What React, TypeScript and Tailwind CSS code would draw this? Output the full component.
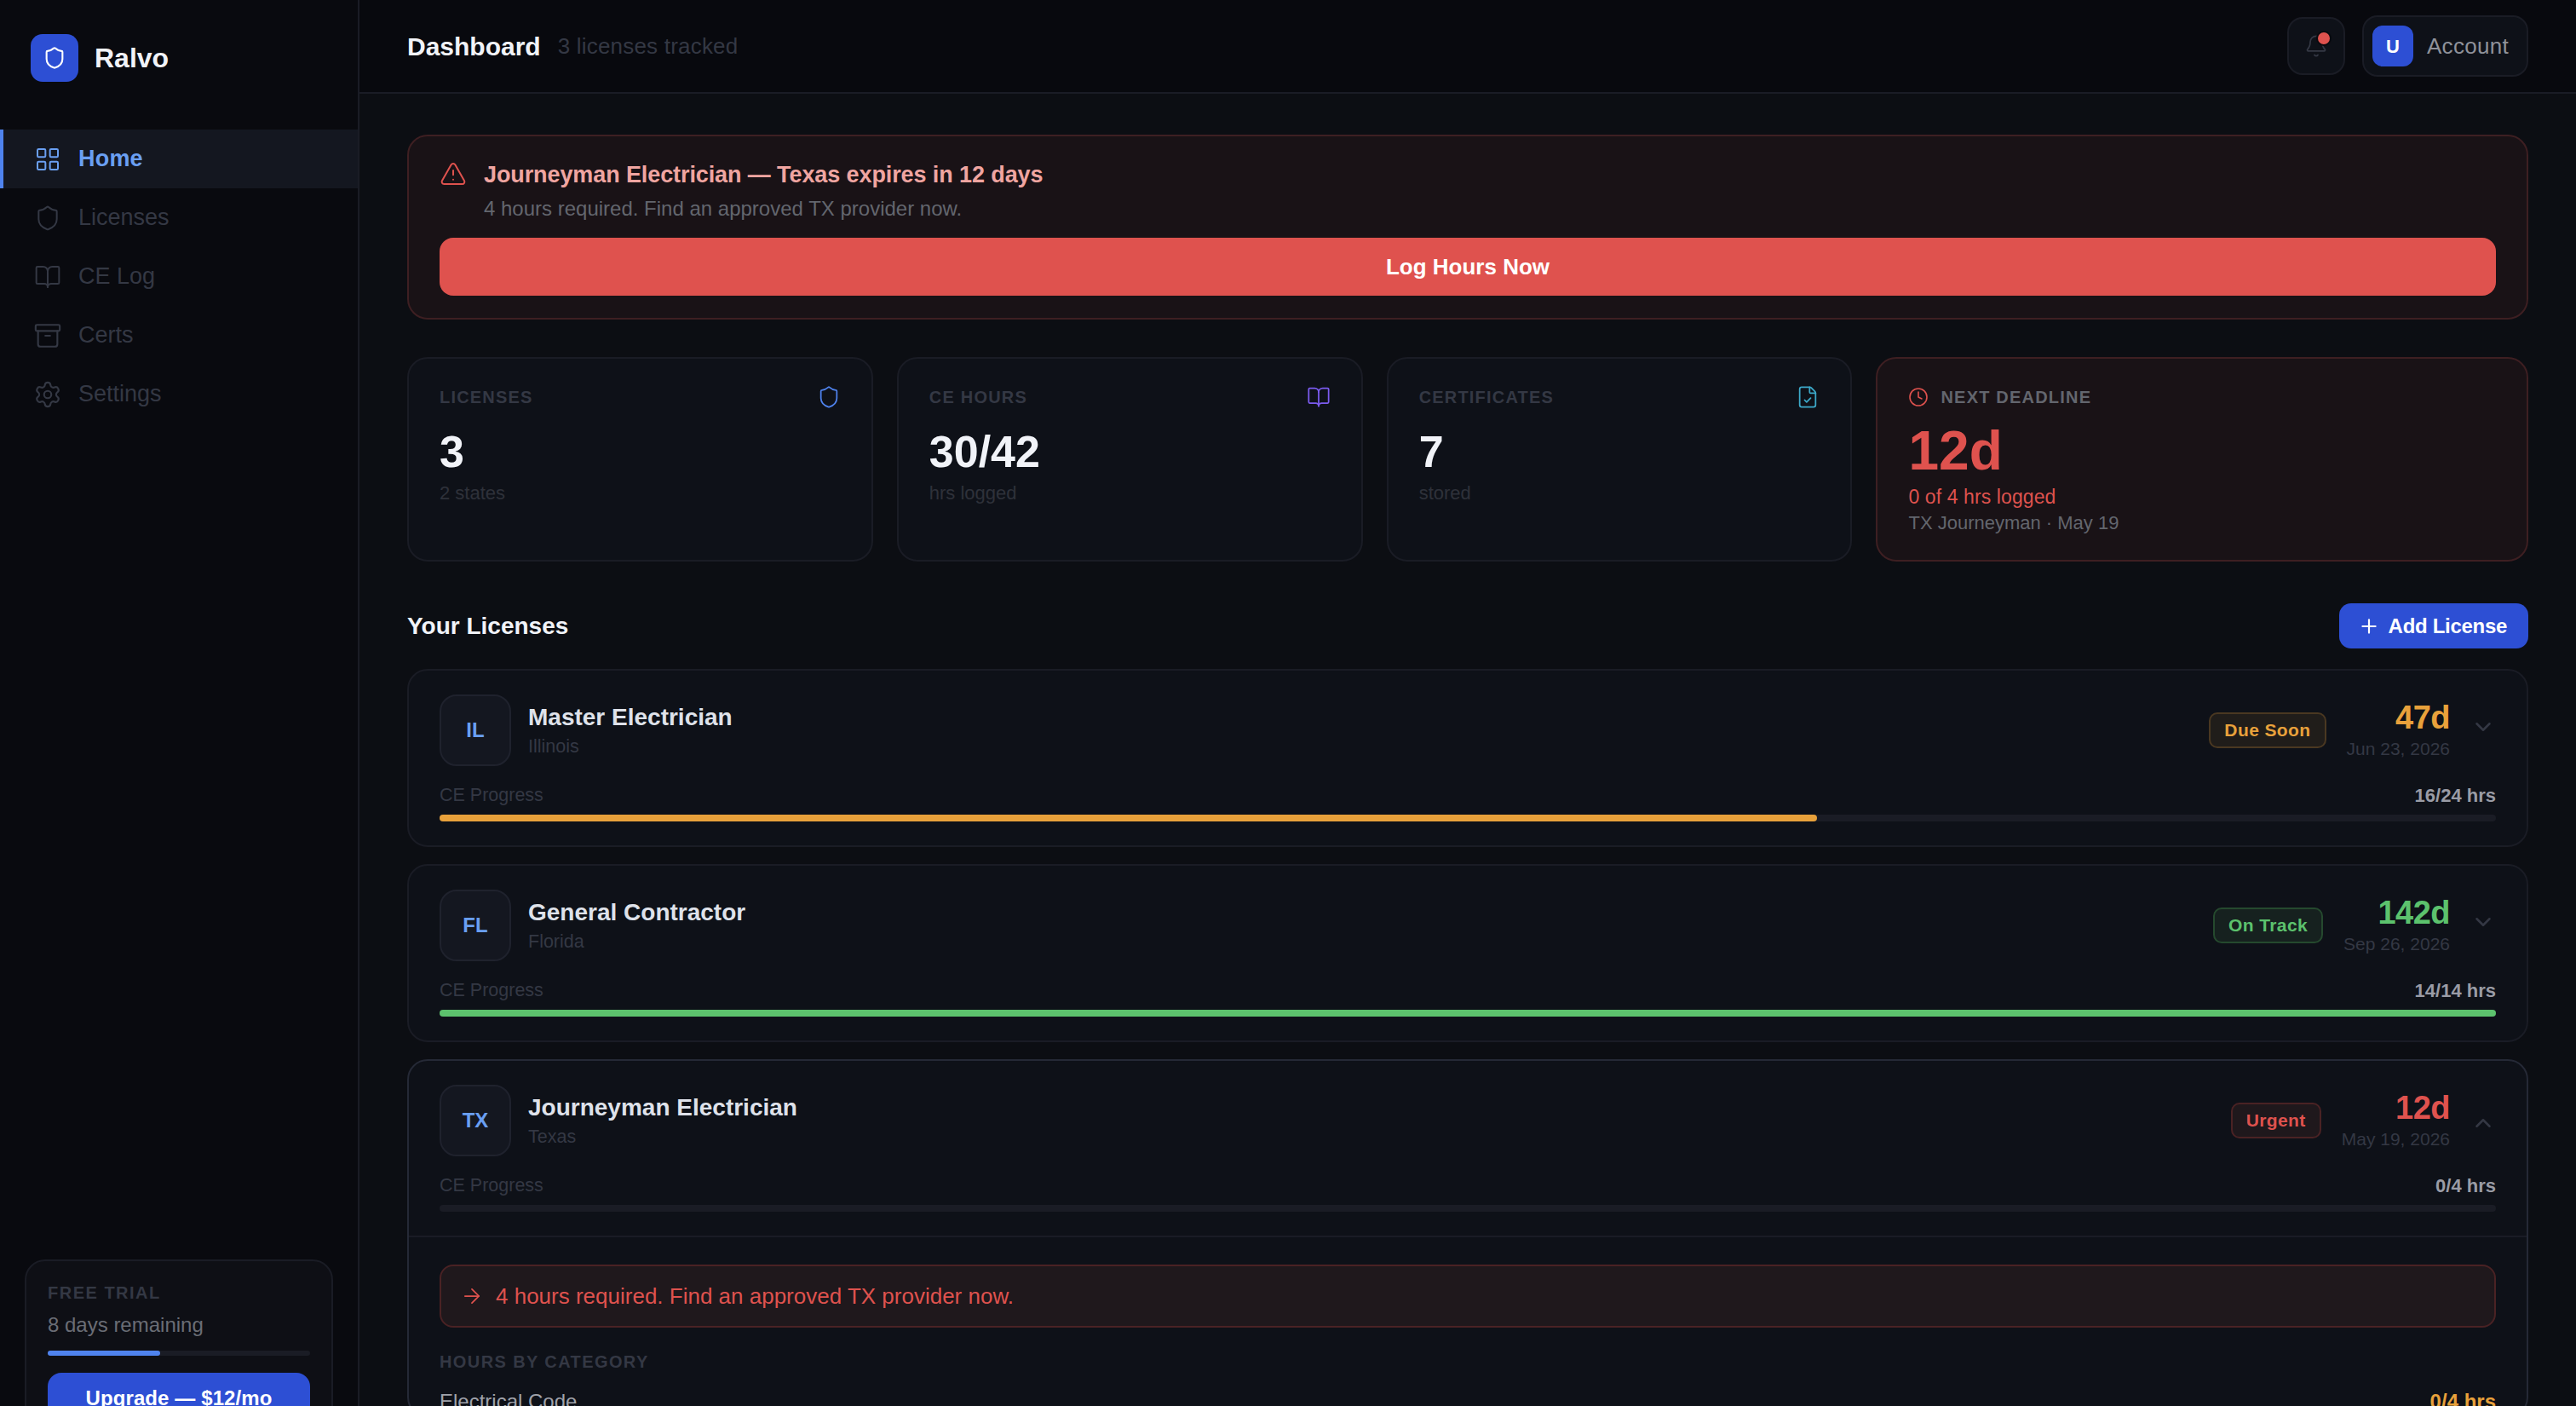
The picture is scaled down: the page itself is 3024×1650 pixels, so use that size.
import { LayoutGrid, Shield, BookOpen, Archive, Settings, Bell, TriangleAlert, FileCheck, Clock, Plus, ChevronDown, ChevronUp, ArrowRight } from "lucide-react";

const nav = [
  { label: "Licenses", Icon: Shield, size: 32 },
  { label: "CE Log", Icon: BookOpen, size: 32 },
  { label: "Certs", Icon: Archive, size: 34 },
  { label: "Settings", Icon: Settings, size: 34 },
];

function Sidebar() {
  return (
    <aside className="w-[422px] shrink-0 flex flex-col bg-[#090a0f] border-r-2 border-[#1a1c25]">
      <div className="flex items-center gap-[19px] pl-9 pt-10 mb-14">
        <div className="w-14 h-14 rounded-[14px] bg-[#2d4fd4] flex items-center justify-center">
          <Shield size={28} strokeWidth={1.8} color="#ffffff" />
        </div>
        <span className="text-[32px] leading-[44px] font-semibold text-[#f1f3f8]">Ralvo</span>
      </div>
      <nav className="flex flex-col">
        <div className="h-[69px] flex items-center gap-5 pl-9 border-l-4 border-[#4f83ee] bg-[#141720]">
          <LayoutGrid size={32} strokeWidth={1.5} color="#6a9ff2" />
          <span className="text-[27px] tracking-[0.2px] font-semibold text-[#6a9ff2]">Home</span>
        </div>
        {nav.map(({ label, Icon, size }) => (
          <div key={label} className="h-[69px] flex items-center gap-5 pl-10">
            <span className="w-8 h-8 flex items-center justify-center">
              <Icon size={size} strokeWidth={1.5} color="#343844" className="shrink-0" />
            </span>
            <span className="text-[27px] font-normal text-[#343844]">{label}</span>
          </div>
        ))}
      </nav>
      <div className="mt-auto mx-[29px] mb-[29px] rounded-3xl border-2 border-[#1a1c25] bg-[#0e0f15] px-[25px] pt-[22px] pb-[26px]">
        <div className="text-[20px] leading-[30px] font-bold tracking-[1.5px] text-[#343844]">FREE TRIAL</div>
        <div className="text-[24px] leading-[36px] mt-[5px] text-[#6a6d75]">8 days remaining</div>
        <div className="h-1.5 mt-3 rounded-full bg-[#1a1c25]">
          <div className="h-1.5 w-[43%] rounded-full bg-[#4f83ee]" />
        </div>
        <div className="mt-5 h-[60px] rounded-2xl bg-[#2d4fd4] flex items-center justify-center text-[24px] tracking-[0.1px] font-semibold text-white">
          Upgrade — $12/mo
        </div>
      </div>
    </aside>
  );
}

function Header() {
  return (
    <header className="h-[110px] shrink-0 border-b-2 border-[#1a1c25] bg-[#08090e] flex items-center justify-between px-14">
      <div className="flex items-center gap-5">
        <span className="text-[30px] font-semibold text-[#f1f3f8]">Dashboard</span>
        <span className="text-[26px] tracking-[0.2px] text-[#343844]">3 licenses tracked</span>
      </div>
      <div className="flex items-center gap-5">
        <div className="w-[68px] h-[68px] rounded-[18px] border-2 border-[#1a1c25] bg-[#0e1118] flex items-center justify-center relative">
          <Bell size={28} strokeWidth={1.5} color="#343844" />
          <span className="absolute top-[14px] right-[14px] w-[18px] h-[18px] rounded-full bg-[#df524e] border-2 border-[#090a0f]" />
        </div>
        <div className="h-[72px] rounded-[18px] border-2 border-[#1a1c25] bg-[#0e1118] flex items-center gap-4 pl-[10px] pr-[21px]">
          <div className="w-12 h-12 rounded-xl bg-[#2d4fd4] flex items-center justify-center text-[22px] font-bold text-white">U</div>
          <span className="text-[26px] tracking-[0.3px] text-[#8f929a]">Account</span>
        </div>
      </div>
    </header>
  );
}

function Alert() {
  return (
    <section className="rounded-3xl border-2 border-[#3e1f22] bg-[#191216] px-9 pt-[26px] pb-[26px]">
      <div className="flex items-start gap-5">
        <TriangleAlert size={32} strokeWidth={1.5} color="#df524e" className="mt-[2px]" />
        <div>
          <div className="text-[27px] leading-[38px] font-semibold tracking-[-0.1px] text-[#f0a5a1]">Journeyman Electrician — Texas expires in 12 days</div>
          <div className="text-[24px] leading-[36px] mt-[3px] text-[#63666e]">4 hours required. Find an approved TX provider now.</div>
        </div>
      </div>
      <div className="mt-4 h-[68px] rounded-2xl bg-[#df524e] flex items-center justify-center text-[26px] font-semibold text-white">Log Hours Now</div>
    </section>
  );
}

function Stat({ label, value, sub, icon }: { label: string; value: string; sub: string; icon: React.ReactNode }) {
  return (
    <div className="h-[240px] rounded-3xl border-2 border-[#1a1c25] bg-[#0e1118] px-9 pt-7">
      <div className="h-[34px] flex items-center justify-between">
        <span className="text-[20px] font-semibold tracking-[1.2px] text-[#343844]">{label}</span>
        {icon}
      </div>
      <div className="mt-[17px] text-[52px] leading-[61px] font-bold text-[#f1f3f8]">{value}</div>
      <div className="mt-[2px] text-[22px] leading-[32px] text-[#2e313a]">{sub}</div>
    </div>
  );
}

function Stats() {
  return (
    <section className="mt-11 grid grid-cols-[1fr_1fr_1fr_1.4fr] gap-7">
      <Stat label="LICENSES" value="3" sub="2 states" icon={<Shield size={28} strokeWidth={1.5} color="#4f83ee" />} />
      <Stat label="CE HOURS" value="30/42" sub="hrs logged" icon={<BookOpen size={28} strokeWidth={1.5} color="#7c5cf0" />} />
      <Stat label="CERTIFICATES" value="7" sub="stored" icon={<FileCheck size={28} strokeWidth={1.5} color="#3ca9c9" />} />
      <div className="h-[240px] rounded-3xl border-2 border-[#3e1f22] bg-[#191216] px-9 pt-7">
        <div className="h-[34px] flex items-center gap-[14px]">
          <Clock size={24} strokeWidth={1.6} color="#df524e" />
          <span className="text-[20px] font-semibold tracking-[1.2px] text-[#63666e]">NEXT DEADLINE</span>
        </div>
        <div className="mt-[10px] text-[64px] leading-[72px] font-bold text-[#df524e]">12d</div>
        <div className="mt-[1px] text-[23px] leading-[34px] tracking-[0.1px] text-[#df524e]">0 of 4 hrs logged</div>
        <div className="text-[22px] leading-[28px] text-[#63666e]">TX Journeyman · May 19</div>
      </div>
    </section>
  );
}

type Lic = {
  st: string; title: string; state: string; badge: string; days: string; date: string; hrs: string; pct: string;
  text: string; badgeCls: string; bar: string; open?: boolean;
};

const lics: Lic[] = [
  { st: "IL", title: "Master Electrician", state: "Illinois", badge: "Due Soon", days: "47d", date: "Jun 23, 2026", hrs: "16/24 hrs", pct: "67%", text: "text-[#e8a13b]", badgeCls: "text-[#e8a13b] bg-[#201d1a] border-[#4a3821]", bar: "bg-[#e8a13b]" },
  { st: "FL", title: "General Contractor", state: "Florida", badge: "On Track", days: "142d", date: "Sep 26, 2026", hrs: "14/14 hrs", pct: "100%", text: "text-[#5cc26d]", badgeCls: "text-[#5cc26d] bg-[#16211f] border-[#25492e]", bar: "bg-[#5cc26d]" },
  { st: "TX", title: "Journeyman Electrician", state: "Texas", badge: "Urgent", days: "12d", date: "May 19, 2026", hrs: "0/4 hrs", pct: "0%", text: "text-[#df524e]", badgeCls: "text-[#df524e] bg-[#1f181c] border-[#4a2224]", bar: "bg-[#df524e]", open: true },
];

function LicenseCard({ l }: { l: Lic }) {
  return (
    <article className={`rounded-3xl border-2 bg-[#0e1118] ${l.open ? "border-[#252936]" : "border-[#1a1c25]"}`}>
      <div className="px-9 pt-7 pb-7">
        <div className="flex items-center">
          <div className="w-[84px] h-[84px] rounded-[20px] border-2 border-[#1f222d] bg-[#141720] flex items-center justify-center text-[24px] font-bold text-[#6a9ff2]">{l.st}</div>
          <div className="ml-5">
            <div className="text-[28px] leading-[38px] font-semibold text-[#dfe2ea]">{l.title}</div>
            <div className="text-[21.5px] leading-[30px] text-[#343844]">{l.state}</div>
          </div>
          <div className={`ml-auto h-[42px] px-4 rounded-[10px] border-2 flex items-center text-[21px] font-semibold tracking-[0.4px] ${l.badgeCls}`}>{l.badge}</div>
          <div className="ml-6 flex flex-col items-end">
            <span className={`text-[38px] leading-[44px] font-bold tracking-[-0.5px] ${l.text}`}>{l.days}</span>
            <span className="text-[21px] leading-[30px] text-[#343844]">{l.date}</span>
          </div>
          {l.open ? (
            <ChevronUp size={30} strokeWidth={2} color="#343844" className="ml-6 mt-[6px]" />
          ) : (
            <ChevronDown size={30} strokeWidth={2} color="#343844" className="ml-6 mb-2" />
          )}
        </div>
        <div className="mt-4 flex items-center justify-between h-9">
          <span className="text-[21.5px] text-[#343844]">CE Progress</span>
          <span className="text-[22px] font-semibold text-[#9a9ca6]">{l.hrs}</span>
        </div>
        <div className="mt-[5px] h-2 rounded-full bg-[#1a1c25]">
          <div className={`h-2 rounded-full ${l.bar}`} style={{ width: l.pct }} />
        </div>
      </div>
      {l.open && (
        <div className="border-t-2 border-[#1a1c25] px-9 pt-8">
          <div className="h-[74px] rounded-2xl border-2 border-[#4a2224] bg-[#1f181c] flex items-center gap-[14px] pl-[22px]">
            <ArrowRight size={28} strokeWidth={1.5} color="#df524e" />
            <span className="text-[26px] font-medium text-[#df524e]">4 hours required. Find an approved TX provider now.</span>
          </div>
          <div className="mt-6 text-[20px] leading-[32px] font-semibold tracking-[1.4px] text-[#343844]">HOURS BY CATEGORY</div>
          <div className="mt-[14px] flex justify-between text-[24px] leading-[34px]">
            <span className="text-[#a0a3ab]">Electrical Code</span>
            <span className="font-semibold text-[#e8a13b]">0/4 hrs</span>
          </div>
        </div>
      )}
    </article>
  );
}

export default function App() {
  return (
    <div className="h-screen overflow-hidden font-['Liberation_Sans',sans-serif] bg-[#0c0e13]">
      <div className="flex h-[1728px]">
        <Sidebar />
        <div className="flex-1 min-w-0 flex flex-col">
          <Header />
          <main className="flex-1 bg-[#0c0e13] px-14 pt-12">
            <Alert />
            <Stats />
            <div className="mt-[49px] mb-6 h-[53px] flex items-center justify-between">
              <h2 className="text-[28px] font-semibold text-[#f1f3f8]">Your Licenses</h2>
              <div className="h-[53px] rounded-[14px] bg-[#2d4fd4] flex items-center gap-[10px] pl-[22px] pr-[25px] text-[24px] tracking-[-0.3px] font-semibold text-white">
                <Plus size={26} strokeWidth={2} color="#ffffff" />
                Add License
              </div>
            </div>
            <div className="flex flex-col gap-5">
              {lics.map((l) => (
                <LicenseCard key={l.st} l={l} />
              ))}
            </div>
          </main>
        </div>
      </div>
    </div>
  );
}
